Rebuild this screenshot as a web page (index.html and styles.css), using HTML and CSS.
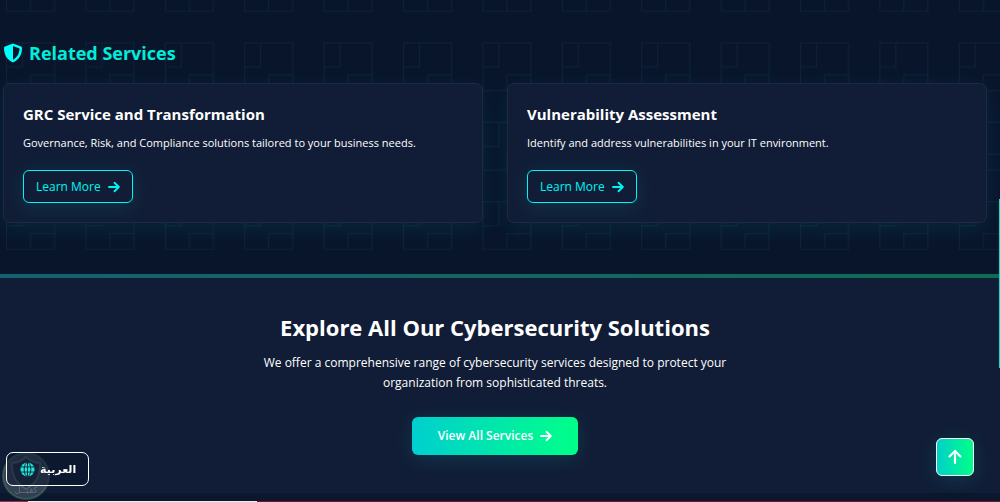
FILE: index.html
```html
<!DOCTYPE html>
<html lang="en">
<head>
<meta charset="utf-8">
<meta name="viewport" content="width=device-width, initial-scale=1">
<title>Related Services</title>
<link rel="stylesheet" href="styles.css">
</head>
<body>
<svg class="symbols" aria-hidden="true">
  <symbol id="arrow" viewBox="0 0 12 12"><path d="M1 6H10.500M6.500 1.800 10.800 6l-4.300 4.200" fill="none" stroke="currentColor" stroke-width="1.900" stroke-linecap="round" stroke-linejoin="round"/></symbol>
</svg>
<main>
  <section class="related">
    <svg class="circuit" aria-hidden="true">
      <defs>
        <pattern id="grid" x="6" y="-37" width="79.400" height="79.400" patternUnits="userSpaceOnUse">
          <path d="M.5 .5H48.500V48.500H.5ZM16.500 .5V24.500H.5M24.500 48.500V32.500H48.500" fill="none" stroke="#0c2b40" stroke-opacity=".65"/>
        </pattern>
      </defs>
      <rect width="100%" height="250" fill="url(#grid)"/>
    </svg>
    <div class="content">
      <h2 class="heading">
        <svg class="shield" viewBox="0 0 20 20" aria-hidden="true"><path fill="currentColor" fill-rule="evenodd" d="M10 .5 18 3.600q1 .4 1 1.400c0 6-2.500 11.500-9 14.500C3.500 16.500 1 11 1 5q0-1 1-1.400ZM10 3v13.800c4.500-2.500 6.400-6.400 6.500-11.200Z"/></svg>
        Related Services
      </h2>
      <div class="cards">
        <article class="card">
          <h3>GRC Service and Transformation</h3>
          <p>Governance, Risk, and Compliance solutions tailored to your business needs.</p>
          <a class="more" href="#">Learn More <svg class="arrow"><use href="#arrow"/></svg></a>
        </article>
        <article class="card">
          <h3>Vulnerability Assessment</h3>
          <p>Identify and address vulnerabilities in your IT environment.</p>
          <a class="more" href="#">Learn More <svg class="arrow"><use href="#arrow"/></svg></a>
        </article>
      </div>
    </div>
  </section>
  <section class="explore">
    <h2>Explore All Our Cybersecurity Solutions</h2>
    <p>We offer a comprehensive range of cybersecurity services designed to protect your organization from sophisticated threats.</p>
    <a class="primary" href="#">View All Services <svg class="arrow"><use href="#arrow"/></svg></a>
  </section>
</main>
<footer class="footer"></footer>
<div class="scrollbar"></div>
<svg class="seal" viewBox="0 0 50 50" aria-hidden="true">
  <circle cx="25" cy="25" r="23" fill="#a8b5bb" fill-opacity=".25" stroke="#4e8465" stroke-opacity=".45" stroke-width="2"/>
  <path d="M11 12q8 0 14-6 6 6 14 6c0 14-4 20-14 26C15 32 11 26 11 12Z" fill="#0c1c34" fill-opacity=".5" stroke="#8a9ba7" stroke-opacity=".35" stroke-width="2"/>
  <text class="seal-text" x="25" y="42" text-anchor="middle">كفيــل</text>
</svg>
<button class="language" type="button" lang="ar">
  <svg class="globe" viewBox="0 0 16 16" aria-hidden="true"><circle cx="8" cy="8" r="7.500" fill="#22e5d5"/><path d="M1 5.300h14M1 10.700h14M8 .5v15" stroke="#0b1830" stroke-width=".9"/><ellipse cx="8" cy="8" rx="3.500" ry="7.500" fill="none" stroke="#0b1830" stroke-width=".9"/></svg>
  <span>العربية</span>
</button>
<button class="top" type="button" aria-label="Back to top"><svg viewBox="0 0 16 16" aria-hidden="true"><path d="M8 14V2.200M2.500 7.500 8 2l5.500 5.500" fill="none" stroke="currentColor" stroke-width="2.200" stroke-linecap="round" stroke-linejoin="round"/></svg></button>
</body>
</html>
```
FILE: styles.css
```css
* { box-sizing: border-box; }
body {
  margin: 0;
  background: #09152b;
  color: #fff;
  font-family: "Segoe UI", "Open Sans", "Noto Sans", "DejaVu Sans", sans-serif;
  font-size: 12px;
  overflow: hidden;
}
h2, h3, p { margin: 0; }
a { text-decoration: none; }
.symbols { position: absolute; width: 0; height: 0; }
.related {
  position: relative;
  padding: 40px 13px 51px 3px;
}
.circuit { position: absolute; inset: 0; width: 100%; height: 100%; }
.content { position: relative; }
.heading {
  display: flex;
  align-items: center;
  gap: 6px;
  margin-bottom: 17px;
  color: #00eddc;
  font-size: 18px;
  font-weight: 700;
  line-height: 26px;
}
.shield { width: 20px; height: 20px; color: #0ff; }
.cards { display: grid; grid-template-columns: 1fr 1fr; gap: 24px; }
.card {
  padding: 19px;
  background: #111d36;
  border: 1px solid #1d2b3d;
  border-radius: 7px;
  box-shadow: 0 6px 25px rgba(0, 255, 255, .08);
}
.card h3 { font-size: 15px; font-weight: 700; line-height: 22px; }
.card p { margin: 8px 0 17px; font-size: 11px; line-height: 20px; }
.arrow { width: 12px; height: 12px; }
.more {
  display: inline-flex;
  align-items: center;
  gap: 7px;
  padding: 0 12px;
  border: 1px solid #00f5f5;
  border-radius: 6px;
  color: #00f5f0;
  font-size: 12px;
  line-height: 31px;
  box-shadow: 0 4px 20px rgba(0, 255, 255, .1);
}
.explore {
  display: flex;
  flex-direction: column;
  align-items: center;
  padding: 33px 30px 38px 20px;
  background: #111d36;
  border-top: 4px solid;
  border-image: linear-gradient(90deg, #146171, #116b53) 1;
  text-align: center;
}
.explore h2 { font-size: 22px; font-weight: 700; line-height: 32px; }
.explore p { max-width: 476px; margin: 10px 0 24px; font-size: 12px; line-height: 20px; }
.primary {
  display: inline-flex;
  align-items: center;
  gap: 7px;
  padding: 0 26px;
  border-radius: 6px;
  background: linear-gradient(90deg, #00cfcf, #00ff88);
  color: #fff;
  font-weight: 600;
  line-height: 38px;
  box-shadow: 0 4px 20px rgba(0, 255, 255, .12);
}
.footer {
  height: 9px;
  background:
    linear-gradient(90deg, #97304a 28px, #eee 28px 257px, #701827 257px) bottom / 100% 1px no-repeat,
    #0a172d;
}
.scrollbar { position: fixed; right: 0; top: 199px; width: 1px; height: 169px; background: #00e5d5; }
.language {
  position: fixed;
  left: 6px;
  bottom: 16px;
  display: flex;
  align-items: center;
  gap: 5px;
  height: 34px;
  padding: 0 12px 0 13px;
  border: 1px solid #fff;
  border-radius: 7px;
  background: rgba(8, 20, 42, .5);
  color: #fff;
  font-family: "DejaVu Sans", sans-serif;
  font-size: 11px;
  font-weight: 700;
}
.globe { width: 15px; height: 15px; }
.seal { position: fixed; left: 1px; bottom: 1px; width: 50px; height: 50px; pointer-events: none; }
.seal-text { fill: #8796a3; fill-opacity: .5; font: 9px "DejaVu Sans", sans-serif; }
.top {
  position: fixed;
  right: 26px;
  bottom: 26px;
  display: grid;
  place-items: center;
  width: 38px;
  height: 38px;
  padding: 0;
  border: 1px solid #fff;
  border-radius: 6px;
  background: linear-gradient(90deg, #00d0c8, #00ff88);
  color: #fff;
  box-shadow: 0 4px 20px rgba(0, 255, 255, .12);
}
.top svg { width: 16px; height: 16px; }
```
